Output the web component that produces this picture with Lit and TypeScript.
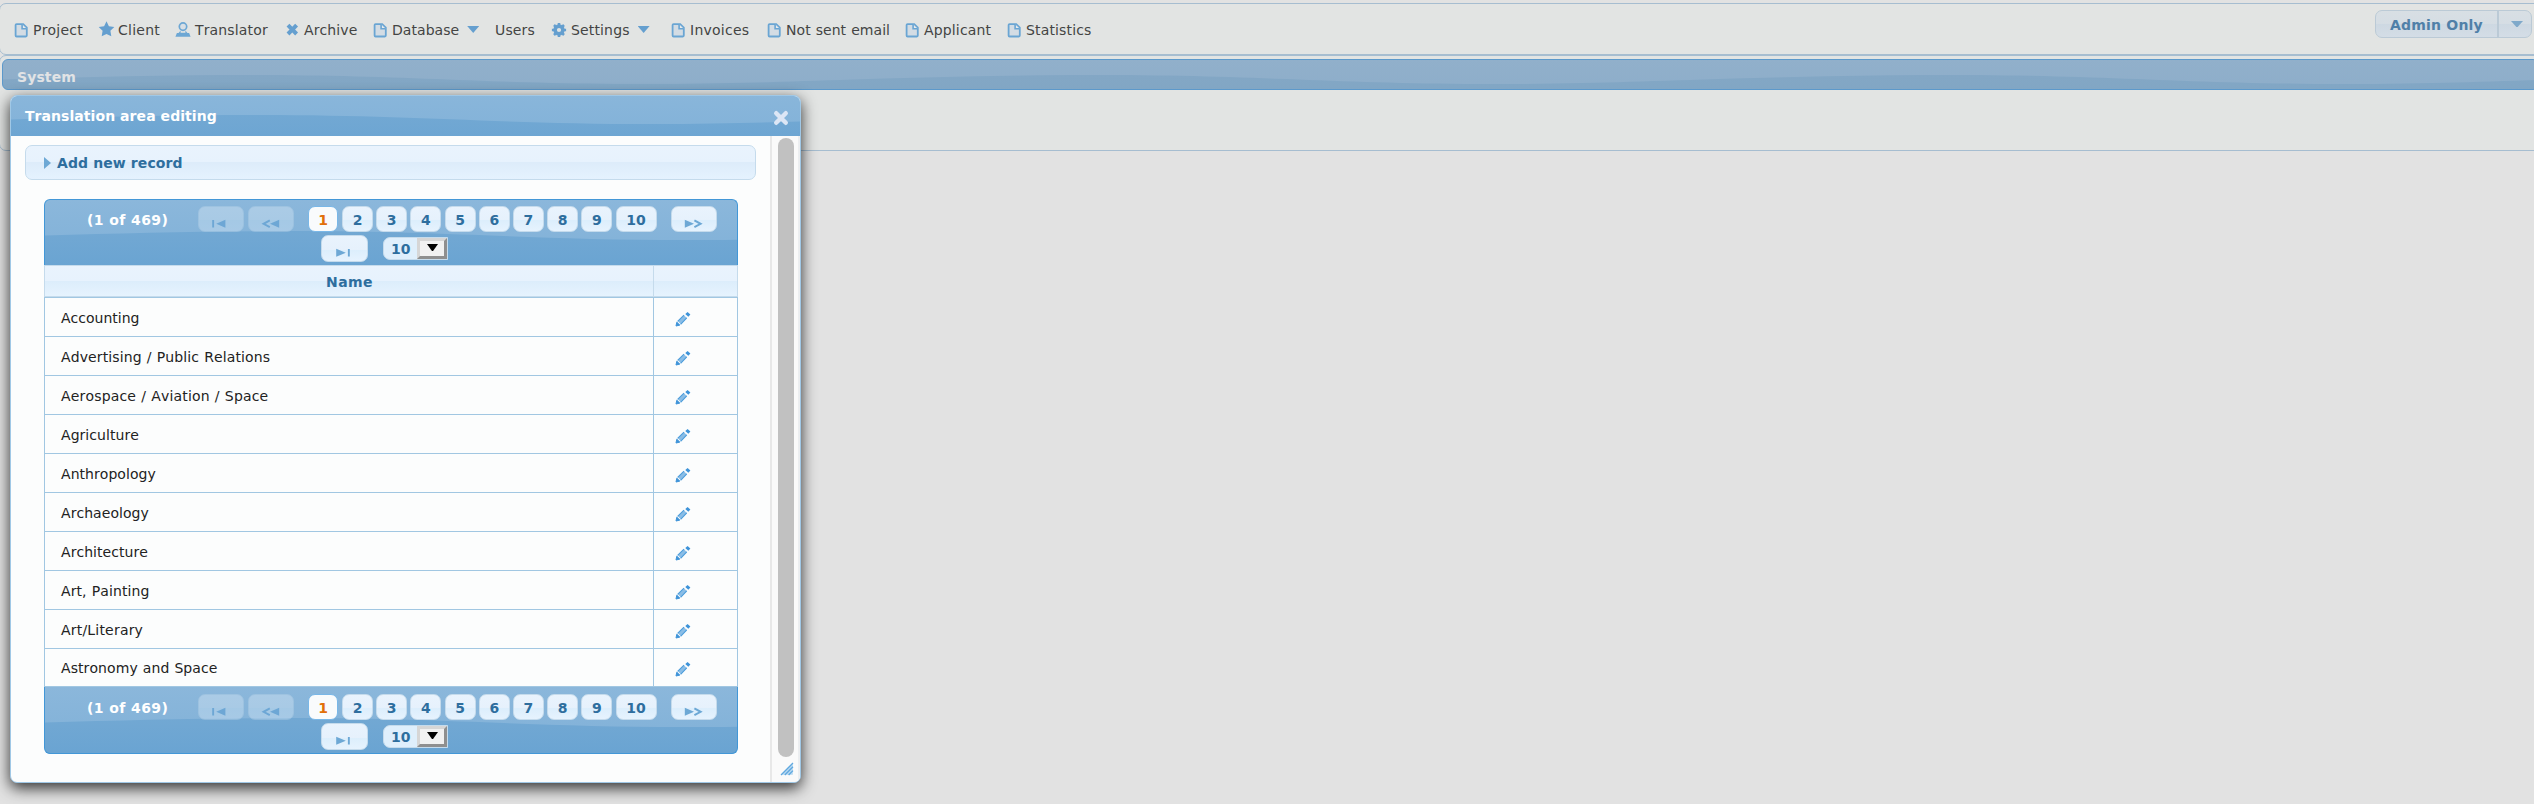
import { LitElement, html, svg, css, unsafeCSS, nothing } from "lit";
import { customElement, property } from "lit/decorators.js";

const WAVE_EDGE = "M0 35.5C80 33 165 31 250 31C400 31 490 40 640 40C730 40 780 37.5 850 35.5";

/** Repeating gloss wave used by every header bar. */
const wave = (above: string, upperMid: string, below: string, bottom: string) =>
  unsafeCSS(
    `url("data:image/svg+xml,${encodeURIComponent(
      `<svg xmlns="http://www.w3.org/2000/svg" width="850" height="100"><defs>` +
        `<linearGradient id="a" x1="0" y1="0" x2="0" y2="1"><stop offset="0" stop-color="${above}"/><stop offset=".4" stop-color="${upperMid}"/></linearGradient>` +
        `<linearGradient id="b" x1="0" y1="0" x2="0" y2="1"><stop offset="0" stop-color="${below}"/><stop offset=".5" stop-color="${bottom}"/></linearGradient></defs>` +
        `<rect width="850" height="100" fill="url(#a)"/><path d="${WAVE_EDGE}V100H0Z" fill="url(#b)"/></svg>`
    )}")`
  );

const blueWave = wave("#8bb7db", "#84b3d9", "#72a8d3", "#6aa4d2");
const dimWave = wave("#93b1cb", "#8eaeca", "#83a7c5", "#7fa5c3");

const icons: Record<string, unknown> = {
  doc: svg`<path d="M3.6 2.1h6.6l3.6 3.6v7.9a.9.9 0 0 1-.9.9H3.6a1 1 0 0 1-1-1V3.1a1 1 0 0 1 1-1z" fill="#d3dce4" stroke="#6aa5d3" stroke-width="1.8"/><path d="M9.1 2.5v4.3h4.5" fill="#e6eaec" stroke="#6aa5d3" stroke-width="1.6"/>`,
  star: svg`<path d="M8.5-.8l2.4 5 5.4.8-3.9 3.8.9 5.5-4.8-2.4-4.8 2.4.9-5.5L.7 5l5.4-.8z" fill="#659fcf"/>`,
  person: svg`<circle cx="8" cy="4.6" r="3.7" fill="#d8dfe5" stroke="#6da7d4" stroke-width="1.7"/><path d="M5.6 8.6L3.6 11H1.9L.4 14.8h15.2L14.1 11h-1.7l-2-2.4v2.2H5.6z" fill="#6da7d4"/>`,
  cross: svg`<path d="M4 3.2l8.6 8.8M12.6 3.2L4 12" stroke="#659fcf" stroke-width="4"/>`,
  gear: svg`<g fill="none" stroke="#659fcf"><circle cx="8" cy="8" r="3.9" stroke-width="3.6"/><path d="M8 .9v2.5M8 12.6v2.5M.9 8h2.5M12.6 8h2.5M3 3l1.8 1.8M11.2 11.2L13 13M3 13l1.8-1.8M11.2 4.8L13 3" stroke-width="2.6"/></g>`,
  first: svg`<path d="M1.2 1h1.9v7.6H1.2zM14.4.8v8L5.2 4.8z" fill="currentColor"/>`,
  last: svg`<path d="M14.8 1h-1.9v7.6h1.9zM1.2.8v8l9.6-4z" fill="currentColor"/>`,
  prev: svg`<path d="M18.2.8v8L9 4.8z" fill="currentColor"/><path d="M8.8 1.4L2.6 4.8l6.2 3.4" fill="none" stroke="currentColor" stroke-width="2"/>`,
  next: svg`<path d="M.8.8v8L10 4.8z" fill="currentColor"/><path d="M10.4 1.4l6.2 3.4-6.2 3.4" fill="none" stroke="currentColor" stroke-width="2"/>`,
};

interface MenuItem {
  label: string;
  icon?: string;
  sub?: boolean;
  width: number;
  tracking: number;
}

const MENU: MenuItem[] = [
  { label: "Project", icon: "doc", width: 85, tracking: 0.2 },
  { label: "Client", icon: "star", width: 77, tracking: 0.25 },
  { label: "Translator", icon: "person", width: 109, tracking: 0.15 },
  { label: "Archive", icon: "cross", width: 88, tracking: 0.1 },
  { label: "Database", icon: "doc", sub: true, width: 123, tracking: 0.05 },
  { label: "Users", width: 56, tracking: 0.15 },
  { label: "Settings", icon: "gear", sub: true, width: 119, tracking: 0.15 },
  { label: "Invoices", icon: "doc", width: 96, tracking: 0.25 },
  { label: "Not sent email", icon: "doc", width: 138, tracking: 0.05 },
  { label: "Applicant", icon: "doc", width: 102, tracking: 0.15 },
  { label: "Statistics", icon: "doc", width: 90, tracking: 0.15 },
];

const AREAS: [string, number][] = [
  ["Accounting", 0],
  ["Advertising / Public Relations", 0.12],
  ["Aerospace / Aviation / Space", 0.17],
  ["Agriculture", 0.05],
  ["Anthropology", 0.05],
  ["Archaeology", 0.05],
  ["Architecture", 0.05],
  ["Art, Painting", 0.1],
  ["Art/Literary", 0.2],
  ["Astronomy and Space", 0.08],
];

@customElement("menu-bar")
export class MenuBar extends LitElement {
  static styles = css`
    :host { display: flex; justify-content: space-between; height: 50px; color: #444; }
    .items { display: flex; padding: 18px 0 0 13px; }
    .item { display: flex; height: 16px; line-height: 16px; white-space: nowrap; }
    .icon { width: 16px; height: 16px; margin-right: 4px; overflow: visible; }
    .label { word-spacing: 0.5px; }
    .down { margin: 4px 0 0 8px; width: 12px; height: 7px; background: #659fcf; clip-path: polygon(0 0, 100% 0, 50% 100%); }
    .split { display: flex; box-sizing: border-box; height: 28px; margin: 6px 9px 0 0; border: 1px solid #bbcad6; border-radius: 7px;
      background: linear-gradient(#d8dfe4, #d5dde4 49%, #cdd8e2 50%, #d4dde6); color: #5080a8; font-weight: bold; }
    .split .text { width: 121px; padding: 6px 0 0 14px; box-sizing: border-box; line-height: 16px; letter-spacing: 0.2px; white-space: nowrap; }
    .split .arrow { width: 34px; border-left: 2px solid #bbcad6; box-sizing: border-box; padding: 10px 0 0 12px; }
    .tri { width: 12px; height: 6px; background: #7fa9ca; clip-path: polygon(0 0, 100% 0, 55% 100%, 45% 100%); }
  `;
  render() {
    return html`
      <div class="items">
        ${MENU.map(
          (m) => html`<div class="item" style="width:${m.width}px">
            ${m.icon ? html`<svg class="icon" viewBox="0 0 16 16">${icons[m.icon]}</svg>` : nothing}
            <span class="label" style="letter-spacing:${m.tracking}px">${m.label}</span>
            ${m.sub ? html`<span class="down"></span>` : nothing}
          </div>`
        )}
      </div>
      <div class="split">
        <div class="text">Admin Only</div>
        <div class="arrow"><div class="tri"></div></div>
      </div>
    `;
  }
}

@customElement("page-navigator")
export class PageNavigator extends LitElement {
  @property({ type: Boolean, reflect: true }) bottom = false;
  static styles = css`
    :host { display: flex; flex-direction: column; box-sizing: border-box; height: 66px; border: 1px solid #4297d7; border-bottom: 0;
      border-radius: 6px 6px 0 0; background: ${blueWave} 0 0 repeat-x; color: #fff; font-weight: bold; padding: 6px 0 0 42px; }
    :host([bottom]) { height: 67px; border: 1px solid #4297d7; border-top: 0; border-radius: 0 0 6px 6px; padding-top: 7px; }
    .line { display: flex; height: 26px; }
    .count { width: 111px; line-height: 16px; padding-top: 6px; letter-spacing: 0.4px; white-space: nowrap; }
    .btn { box-sizing: border-box; display: flex; justify-content: center; height: 26px; margin-right: 4px; border: 1px solid #c5dbec; border-radius: 7px;
      background: linear-gradient(#e9f3fd, #e6f1fc 54%, #dceefc 56%, #e6f3fe); color: #2e6e9e; line-height: 16px; padding-top: 5px; }
    .arrow { width: 46px; color: #6da8d5; }
    .disabled { opacity: 0.35; color: #3f8fce; }
    .glyph { width: 20px; height: 10px; margin-top: 7px; overflow: visible; }
    .gap { margin-left: 10px; }
    .page { width: 31px; margin-right: 3.2px; }
    .on { width: 30px; background: #f9fbfc; border-color: #79b7e7; color: #e17009; margin-right: 4px; }
    .ten { width: 41px; margin-right: 14px; }
    .second { padding-left: 234px; margin-top: 3px; }
    .second .arrow { width: 47px; height: 27px; }
    .select { display: flex; box-sizing: border-box; width: 65px; height: 23px; margin: 2px 0 0 11px; border: 1px solid #c5dbec; border-radius: 7px 0 0 7px;
      background: #dfeffc; color: #2e6e9e; line-height: 16px; }
    .value { width: 33px; padding: 3px 0 0 7px; box-sizing: border-box; }
    .drop { width: 30px; height: 21px; box-sizing: border-box; border: 3px solid; border-color: #d6d6d6 #8f8f8f #8f8f8f #d6d6d6; background: #f1f1f1; padding: 3px 0 0 7px; }
    .tri { width: 11px; height: 7px; background: #000; clip-path: polygon(0 0, 100% 0, 55% 100%, 45% 100%); }
  `;
  render() {
    const glyph = (n: string) => html`<svg class="glyph" viewBox="0 0 20 10">${icons[n]}</svg>`;
    return html`
      <div class="line">
        <span class="count">(1 of 469)</span>
        <span class="btn arrow disabled">${glyph("first")}</span>
        <span class="btn arrow disabled">${glyph("prev")}</span>
        <span class="btn page on gap">1</span>
        ${[2, 3, 4, 5, 6, 7, 8, 9].map((n) => html`<span class="btn page">${n}</span>`)}
        <span class="btn ten">10</span>
        <span class="btn arrow">${glyph("next")}</span>
      </div>
      <div class="line second">
        <span class="btn arrow">${glyph("last")}</span>
        <span class="select"><span class="value">10</span><span class="drop"><div class="tri"></div></span></span>
      </div>
    `;
  }
}

@customElement("area-dialog")
export class AreaDialog extends LitElement {
  static styles = css`
    :host { position: absolute; left: 10px; top: 95px; width: 791px; height: 688px; box-sizing: border-box; border: 1px solid #a0c8e6; border-radius: 7px;
      background: #fcfdfd; box-shadow: 0 5px 15px rgba(0, 0, 0, 0.8); overflow: hidden; display: flex; flex-direction: column; }
    .title { display: flex; justify-content: space-between; height: 40px; flex: none; background: ${blueWave} 0 -12px repeat-x; color: #fff; font-weight: bold; }
    .title span { padding: 12px 0 0 14px; line-height: 16px; letter-spacing: 0.06px; }
    .close { width: 16px; height: 16px; margin: 14px 11px 0 0; }
    .body { display: flex; flex: 1; }
    .content { width: 759px; }
    .track { flex: 1; border-left: 2px solid #e8e8e8; border-right: 2px solid #eceef0; background: #fafafa; padding: 2px 0 0 6px; }
    .thumb { width: 16px; height: 619px; border-radius: 8px; background: #c1c1c1; }
    .grip { display: block; width: 14px; height: 14px; margin: 5px 0 0 2px; }
    .add { display: flex; box-sizing: border-box; width: 731px; height: 35px; margin: 9px 0 19px 14px; border: 1px solid #c5dbec; border-radius: 7px;
      background: linear-gradient(#e9f3fd, #e7f2fd 49%, #ddecfa 50%, #e5f2fe); color: #2e6e9e; font-weight: bold; line-height: 16px; letter-spacing: 0.1px; padding: 9px 0 0 18px; }
    .add i { width: 7px; height: 12px; margin: 2px 6px 0 0; background: #6da8d5; clip-path: polygon(0 0, 100% 50%, 0 100%); }
    .table { width: 694px; margin-left: 33px; }
    .row { display: grid; grid-template-columns: 609px 1fr; box-sizing: border-box; height: 39px; border: 1px solid #a1c7e2; border-bottom: 0; color: #222; }
    .cell { line-height: 16px; padding: 12px 0 0 16px; word-spacing: 0.5px; border-right: 1px solid #a1c7e2; box-sizing: border-box; white-space: nowrap; }
    .row:last-of-type { border-bottom: 1px solid #a1c7e2; }
    .row:last-of-type .cell { padding-top: 11px; }
    .row:last-of-type .pencil { margin-top: 12px; }
    .head { height: 32px; border-color: #c5dbec; border-bottom: 1px solid #c5dbec; background: linear-gradient(#e9f3fd, #e7f2fd 49%, #dcedfb 51%, #e6f3fe); color: #2e6e9e; font-weight: bold; }
    .head .cell { padding: 8px 0 0 1px; text-align: center; letter-spacing: 0.4px; border-color: #c5dbec; }
    .pencil { width: 16px; height: 16px; margin: 13px 0 0 21px; }
  `;
  render() {
    return html`
      <div class="title">
        <span>Translation area editing</span>
        <svg class="close" viewBox="0 0 16 16"><path d="M3.2 3.2l9.6 9.6M12.8 3.2l-9.6 9.6" stroke="#dce6f5" stroke-width="4.4" stroke-linecap="round" /></svg>
      </div>
      <div class="body">
        <div class="content">
          <div class="add"><i></i>Add new record</div>
          <div class="table">
            <page-navigator></page-navigator>
            <div class="row head"><div class="cell">Name</div><div></div></div>
            ${AREAS.map(
              ([name, tracking]) => html`<div class="row">
                <div class="cell" style="letter-spacing:${tracking}px">${name}</div>
                <svg class="pencil" viewBox="0 0 16 16">
                  <path d="M1 15l.8-3.8 3 2.9z" fill="#3d93d9" stroke="#3d93d9" />
                  <path d="M2.8 10.2L9 4.2l2.8 2.7-6.2 6.2z" fill="#8abde6" />
                  <path d="M2.6 10.4L9 4.2M5.6 13.3l6.2-6.4" fill="none" stroke="#4a9cdb" stroke-width="1.1" />
                  <path d="M10.3 2.9L12.6.9l2.8 2.7-2.1 2.2z" fill="#3d93d9" />
                </svg>
              </div>`
            )}
            <page-navigator bottom></page-navigator>
          </div>
        </div>
        <div class="track">
          <div class="thumb"></div>
          <svg class="grip" viewBox="0 0 14 14">
            <path d="M.8 12.8L12.8.8v12z" fill="#b9d9f1" />
            <path d="M1 13L13 1M4.8 13L13 4.8M8.6 13L13 8.6" stroke="#5fa8df" stroke-width="1.3" />
          </svg>
        </div>
      </div>
    `;
  }
}

@customElement("app-root")
export class AppRoot extends LitElement {
  static styles = css`
    :host { display: block; position: relative; height: 804px; overflow: hidden; background: #e2e2e2; padding-top: 3px; box-sizing: border-box;
      font: 14px/16px "DejaVu Sans", Verdana, sans-serif; font-kerning: none; }
    .panel { box-sizing: border-box; margin: 0 -8px 0 -1px; border: 1px solid #a6bdd0; border-radius: 7px; background: #e2e4e3; }
    .bar { height: 52px; }
    .main { height: 96px; padding: 3px 2px 0; }
    .heading { box-sizing: border-box; height: 31px; border: 1px solid #5c99cb; border-radius: 6px; background: ${dimWave} 0 -16px repeat-x;
      color: #e1e3e5; font-weight: bold; letter-spacing: 0.1px; padding: 9px 0 0 14px; }
  `;
  render() {
    return html`
      <div class="panel bar"><menu-bar></menu-bar></div>
      <div class="panel main"><div class="heading">System</div></div>
      <area-dialog></area-dialog>
    `;
  }
}
